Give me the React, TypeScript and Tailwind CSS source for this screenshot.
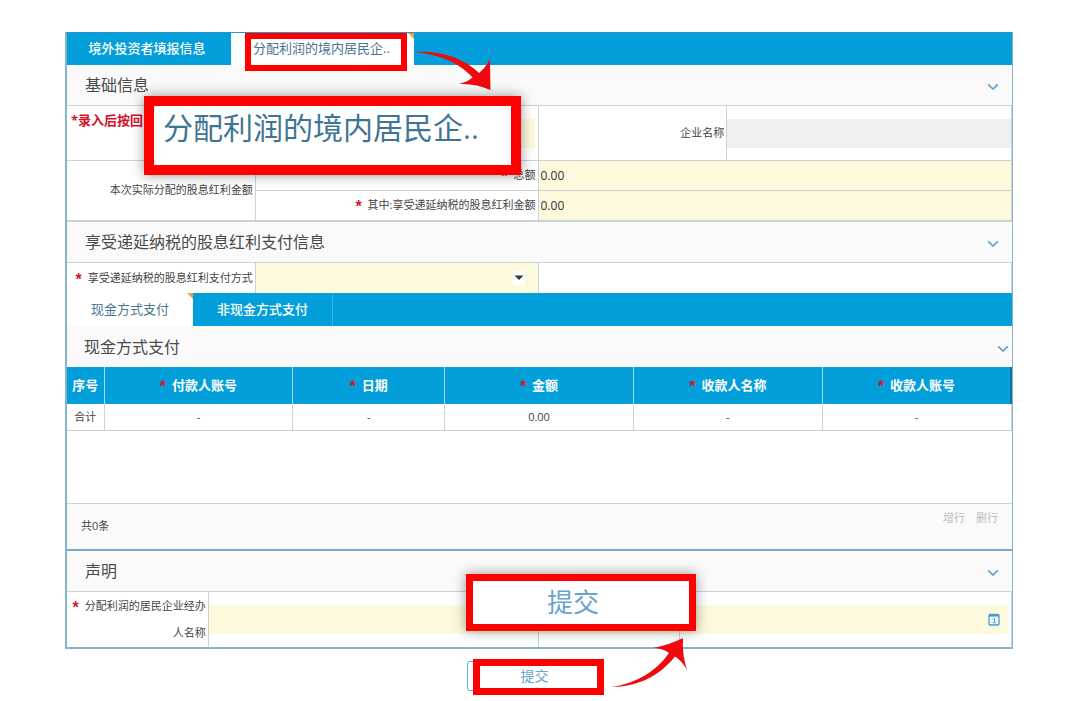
import type { ReactNode } from 'react';

const line = 'border-[#cbd2d6]';

function Star() {
  return (
    <span className="mr-1.5 inline-block h-2 align-middle font-[Liberation_Sans] text-[16px] leading-[9px] font-bold text-[#d3142c]">
      *
    </span>
  );
}

function Chevron() {
  return (
    <svg viewBox="0 0 12 8" className="h-2 w-3" fill="none" stroke="#6fa3c2" strokeWidth="1.8">
      <path d="M1.2 1.4 6 6.1l4.8-4.7" />
    </svg>
  );
}

function SectionTitle({ children, inner = false }: { children: ReactNode; inner?: boolean }) {
  return (
    <div
      className={
        inner
          ? 'flex h-[41px] items-center justify-between bg-[#fafafa] pr-[3px] pl-[17px]'
          : `flex h-[41px] items-center justify-between border-b ${line} bg-[#fafafa] pr-[13px] pl-[18px]`
      }
    >
      <h2 className="text-[16px] leading-6 text-[#4a4a4a]">{children}</h2>
      <button type="button" aria-label="收起" className="pt-1">
        <Chevron />
      </button>
    </div>
  );
}

function Corner() {
  return (
    <svg viewBox="0 0 6 6" className="absolute top-0 right-0 size-[6px]">
      <path d="M0 0h6v6z" fill="#e8a33d" />
    </svg>
  );
}

const columns = ['付款人账号', '日期', '金额', '收款人名称', '收款人账号'];
const totals = ['-', '-', '0.00', '-', '-'];

export default function App() {
  return (
    <main className="bg-white pt-8 pr-[67px] pl-[65px] font-[family-name:'Open_Sans','Noto_Sans_CJK_SC',sans-serif] text-[11px] text-[#444]">
      <form onSubmit={(e) => e.preventDefault()}>
        <div className="border-t border-r border-b-2 border-l-2 border-[#86b4cc] border-t-[#2b93c5]">
          <nav className="flex h-8 bg-[#029fdb] text-[13px]">
            <button type="button" className="w-[164px] pr-2 pl-1 font-medium text-white">
              境外投资者填报信息
            </button>
            <div className="relative w-[183px] bg-white">
              <button type="button" className="h-full w-full pr-0.5 text-[#4a7590]">
                分配利润的境内居民企..
              </button>
              <Corner />
              <div className="pointer-events-none absolute top-0 left-[14px] z-10 h-[38px] w-[162px] border-[6px] border-[#fe0000]" />
              <svg
                viewBox="412 50 80 42"
                className="absolute top-[17px] left-[181px] z-10 h-[42px] w-20"
                fill="#ee0a0e"
              >
                <path d="M414 52C440 50 464 58 479 73Q486 67 490 59L490.500 90Q475 83 459 84Q467 82 472.500 77.500C459 63 442 55 414 52Z" />
              </svg>
              <div className="absolute top-[63px] -left-[87px] z-10 flex h-[79px] w-[377px] items-center justify-start border-[10px] border-[#fe0000] bg-white pb-4 pl-[9px] text-[30px] leading-9 whitespace-nowrap text-[#3f7594] shadow-[0_0_12px_rgba(0,0,0,0.4)]">
                分配利润的境内居民企..
              </div>
            </div>
          </nav>

          <SectionTitle>基础信息</SectionTitle>
          <div className={`grid grid-cols-[189fr_283fr_189fr_284fr] border-r ${line}`}>
            <div className={`h-[55px] border-r border-b ${line} pl-1`}>
              <label htmlFor="code" className="text-[13px] leading-7 font-bold text-[#d3142c]">
                *录入后按回
              </label>
            </div>
            <div className={`flex items-center border-r border-b ${line} pr-[3px]`}>
              <input id="code" className="h-[29px] w-full bg-[#fdf9dc] px-1" />
            </div>
            <div className={`flex items-center justify-end border-r border-b ${line} pr-0.5`}>
              <label htmlFor="company">企业名称</label>
            </div>
            <div className={`flex items-center border-b ${line}`}>
              <input id="company" readOnly className="h-[29px] w-full bg-[#efefef] px-1" />
            </div>
          </div>

          <div className={`grid grid-cols-[189fr_283fr_473fr] border-r border-b-2 ${line}`}>
            <div className={`row-span-2 flex items-center justify-end border-r ${line} pr-0.5`}>
              本次实际分配的股息红利金额
            </div>
            <div className={`flex h-[30px] items-center justify-end border-r border-b ${line} pr-0.5`}>
              <label htmlFor="total">
                <Star />
                总额
              </label>
            </div>
            <input
              id="total"
              defaultValue="0.00"
              className={`h-[30px] w-full border-b ${line} bg-[#fdf9dc] px-0.5 text-[12px] text-[#333]`}
            />
            <div className={`flex h-[29px] items-center justify-end border-r ${line} pr-0.5`}>
              <label htmlFor="deferred">
                <Star />
                其中:享受递延纳税的股息红利金额
              </label>
            </div>
            <input
              id="deferred"
              defaultValue="0.00"
              className="h-[29px] w-full bg-[#fdf9dc] px-0.5 text-[12px] text-[#333]"
            />
          </div>

          <SectionTitle>享受递延纳税的股息红利支付信息</SectionTitle>
          <div className={`grid h-[30px] grid-cols-[189fr_283fr_473fr] border-r ${line}`}>
            <div className={`flex items-center justify-end border-r ${line} pr-0.5`}>
              <label htmlFor="method">
                <Star />
                享受递延纳税的股息红利支付方式
              </label>
            </div>
            <div className={`relative border-r ${line} bg-[#fdf9dc]`}>
              <select id="method" className="h-full w-full appearance-none px-1">
                <option />
              </select>
              <svg
                viewBox="0 0 12 14"
                className="pointer-events-none absolute top-2 right-[13px] h-[14px] w-3 bg-white"
              >
                <path d="M1.500 4.500h9L6 9z" fill="#2f3b44" />
              </svg>
            </div>
          </div>

          <section className="border-b-2 border-[#7fabc9]">
            <nav className="flex h-[33px] bg-[#029fdb] text-[13px]">
              <div className="relative w-[126px] bg-white">
                <button type="button" className="h-full w-full text-[#4a7590]">
                  现金方式支付
                </button>
                <Corner />
              </div>
              <button type="button" className="w-[140px] border-r border-[#36b5e6] font-medium text-white">
                非现金方式支付
              </button>
            </nav>
            <SectionTitle inner>现金方式支付</SectionTitle>
            <table className="w-full table-fixed border-collapse text-center">
              <colgroup>
                <col className="w-[37px]" />
                <col className="w-[20%]" />
                <col />
                <col className="w-[20%]" />
                <col className="w-[20%]" />
                <col className="w-[20%]" />
              </colgroup>
              <thead className="bg-[#029fdb] text-[13px] text-white">
                <tr className="h-[37px]">
                  <th className="border-r border-[#a5dcf2]">序号</th>
                  {columns.map((name) => (
                    <th key={name} className="border-r border-[#a5dcf2] last:border-r-2 last:border-[#15709c]">
                      <Star />
                      {name}
                    </th>
                  ))}
                </tr>
              </thead>
              <tbody>
                <tr className="h-[26px]">
                  <td className={`border-r border-b ${line}`}>合计</td>
                  {totals.map((value, i) => (
                    <td key={columns[i]} className={`border-r border-b ${line}`}>
                      {value}
                    </td>
                  ))}
                </tr>
              </tbody>
            </table>
            <div className="h-[72px]" />
            <div className={`flex h-[46px] justify-between border-t ${line} bg-[#fafafa] pr-[14px] pl-[14px]`}>
              <span className="self-center">共0条</span>
              <div className="flex gap-[11px] self-start pt-1.5 text-[#bdbdbd]">
                <button type="button">增行</button>
                <button type="button">删行</button>
              </div>
            </div>
          </section>

          <SectionTitle>声明</SectionTitle>
          <div className={`grid grid-cols-[142fr_330fr_142fr_331fr] border-r ${line}`}>
            <div className={`h-[55px] border-r ${line} pr-0.5 text-right leading-[27px]`}>
              <label htmlFor="agent">
                <Star />
                分配利润的居民企业经办人名称
              </label>
            </div>
            <div className={`flex items-center border-r ${line}`}>
              <input id="agent" className="h-[29px] w-full bg-[#fdf9dc] px-1" />
            </div>
            <div className={`flex items-center border-r ${line}`}>
              <div className="h-[29px] w-full bg-[#fdf9dc]" />
            </div>
            <div className="flex items-center pr-[3px]">
              <div className="flex h-[29px] w-full items-center bg-[#fdf9dc] pr-2">
                <input aria-label="日期" className="h-full min-w-0 flex-1 px-1" />
                <button type="button" aria-label="选择日期">
                  <svg viewBox="0 0 12 13" className="h-[13px] w-3" fill="none" stroke="#4a9cd0">
                    <rect x="1" y="1.500" width="10" height="10.500" rx="1" fill="#e9f6fc" strokeWidth="1.300" />
                    <path d="M1 2.500h10" strokeWidth="2.200" />
                    <path d="M4.800 5.800h1.800v3.700M4.800 9.700h3" strokeWidth="0.900" />
                  </svg>
                </button>
              </div>
            </div>
          </div>
        </div>

        <div className="flex justify-center pt-3 pr-[9px] pb-2.5">
          <div className="relative">
            <button
              type="submit"
              className="h-[30px] w-[135px] rounded-[3px] border border-[#6fa9cc] text-[14px] text-[#6aa3cc]"
            >
              提交
            </button>
            <div className="pointer-events-none absolute -top-0.5 left-[6px] h-9 w-[131px] border-[7px] border-[#fe0000]" />
            <svg
              viewBox="610 636 80 54"
              className="absolute -top-[25px] left-[143px] z-20 h-[54px] w-20"
              fill="#ee0a0e"
            >
              <path d="M612 687C636 683 656 672 669 653Q662 648 653 648Q669 645 683 638Q682 655 687 670Q682 661 675 656.500C660 675 641 686 612 687Z" />
            </svg>
            <div className="absolute -top-[87px] -left-px z-10 flex h-[57px] w-[230px] items-center justify-center border-[7px] border-[#fe0000] bg-white pr-4 text-[26px] leading-8 text-[#6aa3cc] shadow-[0_0_12px_rgba(0,0,0,0.4)]">
              提交
            </div>
          </div>
        </div>
      </form>
    </main>
  );
}
